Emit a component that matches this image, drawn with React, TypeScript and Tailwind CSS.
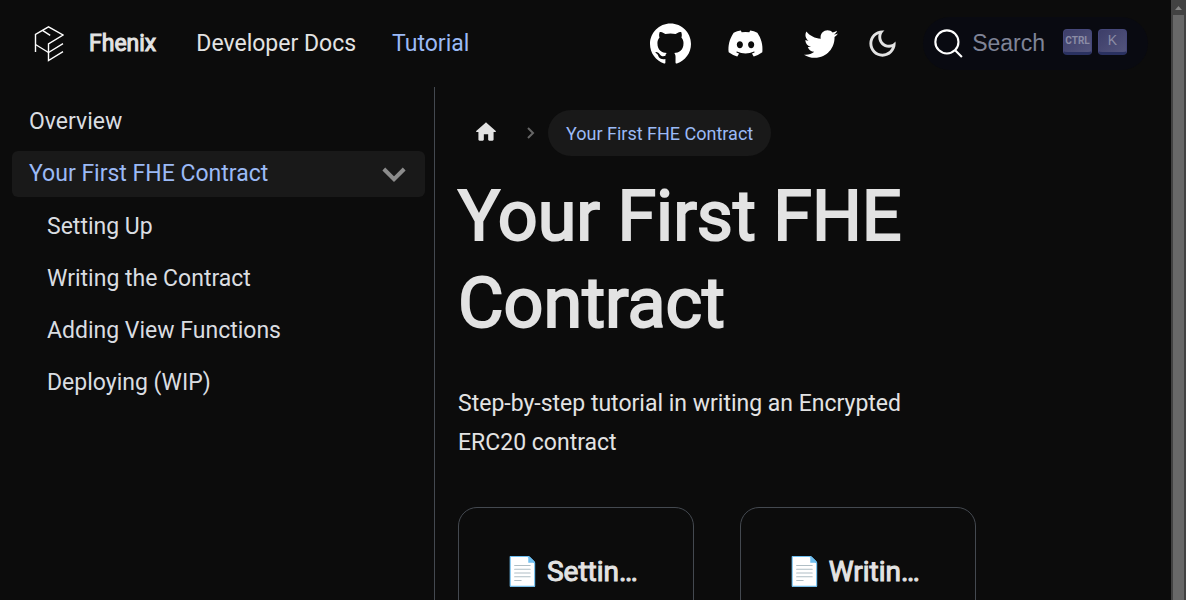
import type { ReactNode } from "react";
import { FaDiscord, FaTwitter } from "react-icons/fa";

const LESSONS = ["Setting Up", "Writing the Contract", "Adding View Functions", "Deploying (WIP)"];

function Logo() {
  return (
    <svg viewBox="0 0 30 36" className="h-9 w-[30px]" fill="none" stroke="#fff" strokeWidth="1.4" aria-hidden="true">
      <path d="M1.5 26V8.500L14.5 0.8L29 9L14.5 17.800V34.500L29 25.700" />
      <path d="M1.5 18.500L14.5 26.500L29 17.700" />
      <path d="M8.5 4.300L16.2 9.300" />
    </svg>
  );
}

function GithubIcon() {
  return (
    <svg viewBox="0 0 24 24" className="size-[41px]" fill="#fff" aria-hidden="true">
      <path d="M12 .297c-6.63 0-12 5.373-12 12 0 5.303 3.438 9.8 8.205 11.385.6.113.82-.258.82-.577 0-.285-.01-1.04-.015-2.04-3.338.724-4.042-1.61-4.042-1.61C4.422 18.07 3.633 17.7 3.633 17.7c-1.087-.744.084-.729.084-.729 1.205.084 1.838 1.236 1.838 1.236 1.07 1.835 2.809 1.305 3.495.998.108-.776.417-1.305.76-1.605-2.665-.3-5.466-1.332-5.466-5.93 0-1.31.465-2.38 1.235-3.22-.135-.303-.54-1.523.105-3.176 0 0 1.005-.322 3.3 1.23.96-.267 1.98-.399 3-.405 1.02.006 2.04.138 3 .405 2.28-1.552 3.285-1.23 3.285-1.23.645 1.653.24 2.873.12 3.176.765.84 1.23 1.91 1.23 3.22 0 4.61-2.805 5.625-5.475 5.92.42.36.81 1.096.81 2.22 0 1.606-.015 2.896-.015 3.286 0 .315.21.69.825.57C20.565 22.092 24 17.592 24 12.297c0-6.627-5.373-12-12-12" />
    </svg>
  );
}

function MoonIcon() {
  return (
    <svg viewBox="0 0 24 24" className="size-[35px]" fill="#e3e3e3" aria-hidden="true">
      <path d="M9.37,5.51C9.19,6.15,9.1,6.82,9.1,7.5c0,4.08,3.32,7.4,7.4,7.4c0.68,0,1.35-0.09,1.99-0.27C17.45,17.19,14.93,19,12,19 c-3.86,0-7-3.14-7-7C5,9.07,6.81,6.55,9.37,5.51z M12,3c-4.97,0-9,4.03-9,9s4.03,9,9,9s9-4.03,9-9c0-0.46-0.04-0.92-0.1-1.36 c-0.98,1.37-2.58,2.26-4.4,2.26c-2.98,0-5.4-2.42-5.4-5.4c0-1.81,0.89-3.42,2.26-4.4C12.92,3.04,12.46,3,12,3L12,3z" />
    </svg>
  );
}

function Key({ children }: { children: ReactNode }) {
  return (
    <kbd className="flex h-[26px] w-[29px] items-center justify-center rounded-[4px] border border-[#45477a] border-b-[3px] border-b-[#2a3160] bg-linear-to-br from-[#3d3e69] to-[#53547c] text-[#8b8ca5]">
      {children}
    </kbd>
  );
}

function Header() {
  return (
    <header className="flex h-[87px] shrink-0 items-center justify-between pr-[23px] pl-[34px]">
      <nav className="flex items-center gap-9 pt-px">
        <a href="#home" className="mr-1 flex items-center gap-[25px]">
          <Logo />
          <span className="[-webkit-text-stroke:1px_currentColor]">Fhenix</span>
        </a>
        <a href="#docs">Developer Docs</a>
        <a href="#tutorial" className="text-[#9bbaf6]">Tutorial</a>
      </nav>
      <div className="flex items-center">
        <a href="#github" aria-label="GitHub" className="mr-9"><GithubIcon /></a>
        <a href="#discord" aria-label="Discord" className="mr-10"><FaDiscord className="size-[37px] text-white" /></a>
        <a href="#twitter" aria-label="Twitter" className="mr-[27px]"><FaTwitter className="size-[34px] text-white" /></a>
        <button type="button" aria-label="Switch theme" className="mr-[23px]"><MoonIcon /></button>
        <button type="button" className="flex h-[53px] items-center rounded-full bg-[#090a11] pr-[21px] pl-[11px]">
          <svg viewBox="0 0 20 20" className="size-[30px]" fill="none" stroke="#fff" strokeWidth="1.4" aria-hidden="true">
            <circle cx="8.6" cy="8.6" r="7.7" />
            <path d="M14.1 14.1L18.6 18.6" />
          </svg>
          <span className="mr-[18px] ml-2 font-['Liberation_Sans',sans-serif] text-[23px] text-[#7f8497]">Search</span>
          <span className="flex gap-[6px] pb-1">
            <Key><span className="font-[Roboto,sans-serif] text-[10px] font-bold">CTRL</span></Key>
            <Key><span className="font-['Liberation_Sans',sans-serif] text-[14px]">K</span></Key>
          </span>
        </button>
      </div>
    </header>
  );
}

function Sidebar() {
  return (
    <aside className="w-[435px] shrink-0 border-r border-[#444950] py-3 pr-[9px] pl-3">
      <ul className="flex flex-col gap-[6px] leading-[30px]">
        <li><a href="#overview" className="block rounded-md px-[17px] py-2 text-[#dadde1]">Overview</a></li>
        <li>
          <a href="#first" className="flex items-center justify-between rounded-md bg-[#191919] py-2 pr-[18px] pl-[17px] text-[#9bbaf6]">
            <span>Your First FHE Contract</span>
            <svg viewBox="0 0 26 26" className="size-[26px]" fill="none" stroke="#8c8c8c" strokeWidth="4" aria-hidden="true">
              <path d="M2.8 8L13 18.2L23.2 8" />
            </svg>
          </a>
        </li>
        {LESSONS.map((name) => (
          <li key={name}><a href="#lesson" className="block rounded-md pt-[9px] pr-[17px] pb-[7px] pl-[35px] text-[#dadde1]">{name}</a></li>
        ))}
      </ul>
    </aside>
  );
}

function Card({ title }: { title: string }) {
  return (
    <a href="#lesson" className="min-w-0 rounded-[19px] border border-[#444950] p-[46px]">
      <h2 className="truncate text-[28px] leading-[35px] [-webkit-text-stroke:1px_currentColor]">📄️ {title}</h2>
    </a>
  );
}

function Article() {
  return (
    <main className="min-w-0 flex-1 px-[23px] py-[23px]">
      <article className="w-3/4">
        <nav aria-label="Breadcrumbs" className="flex h-[46px] items-center text-[18px]">
          <a href="#home" aria-label="Home" className="mb-[3px] ml-[15px]">
            <svg viewBox="0 0 24 24" className="size-[26px]" fill="#e3e3e3" aria-hidden="true">
              <path d="M10 19v-5h4v5c0 .55.45 1 1 1h3c.55 0 1-.45 1-1v-7h1.7c.46 0 .68-.57.33-.87L12.67 3.6c-.38-.34-.96-.34-1.34 0l-8.36 7.53c-.34.3-.13.87.33.87H5v7c0 .55.45 1 1 1h3c.55 0 1-.45 1-1z" />
            </svg>
          </a>
          <svg viewBox="0 0 10 12" className="mr-[12px] ml-[27px] h-3 w-[10px]" fill="none" stroke="#666" strokeWidth="2" aria-hidden="true">
            <path d="M2 1L7 6L2 11" />
          </svg>
          <span className="flex h-full items-center rounded-full bg-[#191919] px-[18px] text-[#9bbaf6]">Your First FHE Contract</span>
        </nav>
        <h1 className="mt-[17px] text-[70px] leading-[87px] [-webkit-text-stroke:2px_currentColor]">Your First FHE Contract</h1>
        <p className="mt-[37px] pr-4 leading-[39px]">Step-by-step tutorial in writing an Encrypted ERC20 contract</p>
        <section className="mt-[45px] grid grid-cols-2 gap-[46px]">
          <Card title="Setting Up" />
          <Card title="Writing the Contract" />
        </section>
      </article>
    </main>
  );
}

export default function App() {
  return (
    <div className="flex h-screen overflow-hidden bg-[#0c0c0c] font-[Roboto,sans-serif] text-[23px] text-[#e3e3e3]">
      <div className="flex min-w-0 flex-1 flex-col">
        <Header />
        <div className="flex flex-1">
          <Sidebar />
          <Article />
        </div>
      </div>
      <div className="flex w-[15px] shrink-0 flex-col items-center bg-[#424242]" aria-hidden="true">
        <svg viewBox="0 0 15 15" className="size-[15px]" fill="#868686"><path d="M4 10L7.500 6L11 10z" /></svg>
        <div className="w-[11px] flex-1 bg-[#686868]" />
      </div>
    </div>
  );
}
